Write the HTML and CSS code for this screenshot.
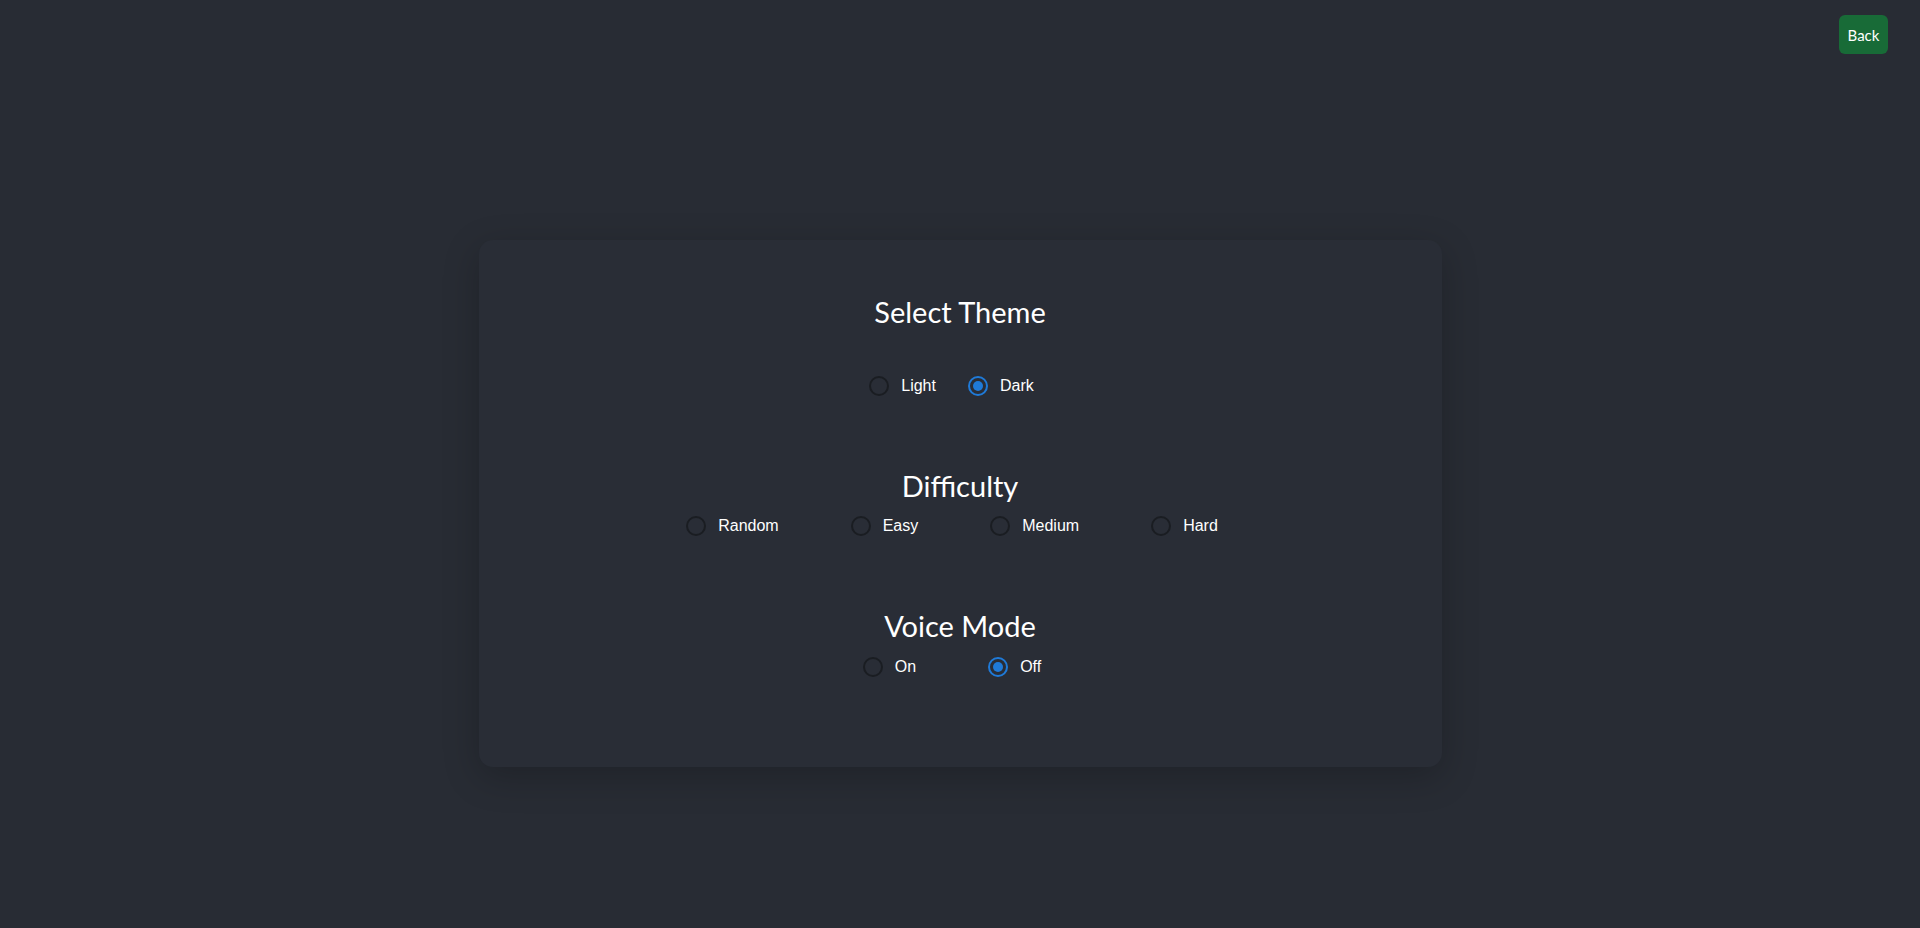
FILE: index.html
```html
<!DOCTYPE html>
<html lang="en">
<head>
<meta charset="utf-8">
<title>Settings</title>
<link rel="stylesheet" href="styles.css">
</head>
<body>
<header class="topbar">
  <button class="back-btn" type="button">Back</button>
</header>
<main class="card">
  <section class="group group-theme">
    <h2 class="group-title">Select Theme</h2>
    <div class="options options-tight">
      <label class="option"><input type="radio" name="theme" value="light"><span>Light</span></label>
      <label class="option"><input type="radio" name="theme" value="dark" checked><span>Dark</span></label>
    </div>
  </section>
  <section class="group">
    <h2 class="group-title">Difficulty</h2>
    <div class="options">
      <label class="option"><input type="radio" name="difficulty" value="random"><span>Random</span></label>
      <label class="option"><input type="radio" name="difficulty" value="easy"><span>Easy</span></label>
      <label class="option"><input type="radio" name="difficulty" value="medium"><span>Medium</span></label>
      <label class="option"><input type="radio" name="difficulty" value="hard"><span>Hard</span></label>
    </div>
  </section>
  <section class="group group-voice">
    <h2 class="group-title">Voice Mode</h2>
    <div class="options">
      <label class="option"><input type="radio" name="voice" value="on"><span>On</span></label>
      <label class="option"><input type="radio" name="voice" value="off" checked><span>Off</span></label>
    </div>
  </section>
</main>
</body>
</html>
```

FILE: styles.css
```css
html, body {
  margin: 0;
  padding: 0;
}

body {
  background: #282c34;
  color: #ffffff;
  font-family: "Liberation Sans", Arial, sans-serif;
  min-height: 928px;
  display: flex;
  flex-direction: column;
}

.topbar {
  display: flex;
  justify-content: flex-end;
  padding: 15px 32px 0 0;
  height: 39px;
}

.back-btn {
  background: #186b37;
  color: #ffffff;
  border: none;
  border-radius: 6px;
  width: 49px;
  height: 39px;
  padding: 0;
  font-family: Lato, "Open Sans", sans-serif;
  font-size: 15px;
  cursor: pointer;
}

.card {
  width: 963px;
  margin: 186px auto 0;
  box-sizing: border-box;
  padding: 54px 0 90px;
  background: #292d36;
  border-radius: 14px;
  box-shadow: 0 10px 36px rgba(0, 0, 0, 0.22);
  display: flex;
  flex-direction: column;
  align-items: center;
  gap: 72px;
}

.group {
  display: flex;
  flex-direction: column;
  align-items: center;
  gap: 12px;
}

.group-theme {
  gap: 46px;
}

.group-voice {
  gap: 13px;
}

.group-title {
  margin: 0;
  font-family: Lato, "Open Sans", sans-serif;
  font-weight: 400;
  font-size: 29px;
  line-height: 36px;
  color: #ffffff;
}

.options {
  display: flex;
  align-items: center;
  gap: 72px;
  padding-right: 16px;
  height: 20px;
}

.options-tight {
  gap: 32px;
  padding-right: 17px;
}

.option {
  display: flex;
  align-items: center;
  gap: 12px;
  font-size: 16px;
  line-height: 20px;
  cursor: pointer;
}

.option input {
  appearance: none;
  -webkit-appearance: none;
  margin: 0;
  width: 20px;
  height: 20px;
  border-radius: 50%;
  border: 2px solid #1a1d22;
  box-sizing: border-box;
  background: transparent;
  display: grid;
  place-content: center;
}

.option input:checked {
  border-color: #1f7ad8;
}

.option input:checked::before {
  content: "";
  width: 10px;
  height: 10px;
  border-radius: 50%;
  background: #1f7ad8;
}
```
